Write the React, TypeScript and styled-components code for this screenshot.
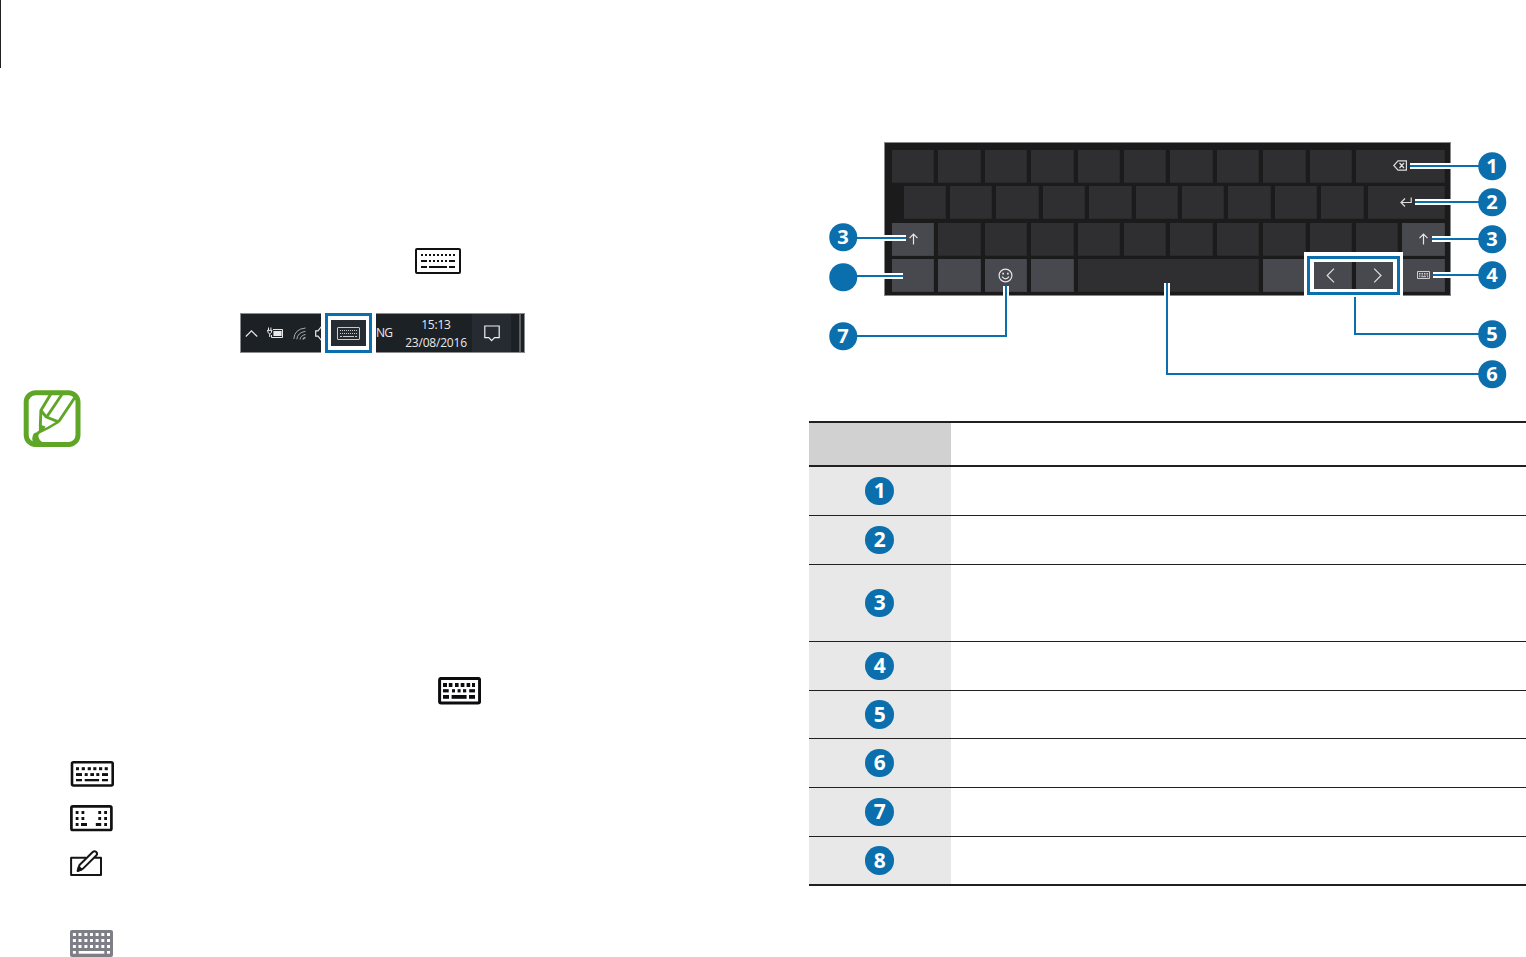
import React from 'react'
import styled, { createGlobalStyle } from 'styled-components'

const BLUE = '#0b6fae'
const INK = '#231f20'

const GlobalStyle = createGlobalStyle`
  * {
    box-sizing: border-box;
  }
  body {
    margin: 0;
    background: #fff;
    font-family: 'Open Sans', 'Noto Sans', sans-serif;
    overflow: hidden;
  }
  svg {
    display: block;
    flex: none;
  }
`

type Bar = [number, number]

interface KeyRow {
  y: number
  h: number
  bars: Bar[]
}

const KeyRows: React.FC<{ rows: KeyRow[] }> = ({ rows }) => (
  <>
    {rows.map(row => row.bars.map(([x, w]) => (
      <rect key={`${row.y}-${x}`} x={x} y={row.y} width={w} height={row.h} />
    )))}
  </>
)

const thinRows: KeyRow[] = [
  { y: 6, h: 2, bars: [[6, 2], [10, 2], [14, 2], [18, 2], [22, 2], [26, 2], [30, 2], [34, 2], [38, 2]] },
  { y: 12, h: 2, bars: [[6, 6], [14, 2], [18, 2], [22, 2], [26, 2], [30, 2], [34, 6]] },
  { y: 18, h: 2, bars: [[6, 6], [14, 18], [34, 6]] }
]

const boldRows: KeyRow[] = [
  { y: 6, h: 4, bars: [[5, 4], [10.8, 3.6], [17, 3.6], [22.7, 3.7], [28.6, 3.6], [34, 3]] },
  { y: 12.2, h: 3.2, bars: [[5, 5.7], [14, 3], [19.6, 3], [25, 3.2], [31.2, 5.8]] },
  { y: 18, h: 3.8, bars: [[5, 6], [13.6, 15], [31, 6]] }
]

const standardRows: KeyRow[] = [
  { y: 6.2, h: 3, bars: [[6, 3], [11.7, 3.2], [17.7, 3.2], [23.3, 3.1], [29, 3.2], [34.7, 3.1]] },
  { y: 12.1, h: 2.9, bars: [[6, 6], [14.7, 3], [20.3, 3.7], [26.3, 3], [32, 6]] },
  { y: 18, h: 2.3, bars: [[6, 6], [14.7, 14.4], [32, 6]] }
]

const splitRows: KeyRow[] = [
  { y: 6, h: 3, bars: [[5.7, 2.8], [11.5, 2.8], [28.3, 2.8], [34.2, 2.8]] },
  { y: 12, h: 3, bars: [[5.7, 2.8], [11.5, 2.8], [28.3, 2.8], [34.2, 2.8]] },
  { y: 18, h: 3, bars: [[5.7, 2.8], [11, 6], [25.8, 5.4], [34.2, 2.8]] }
]

const columns: Bar[] = [[2.9, 3], [8.5, 3], [14.4, 3], [20, 3], [25.6, 3], [31.3, 3], [37, 3]]

const solidRows: KeyRow[] = [
  { y: 4, h: 3, bars: columns },
  { y: 10, h: 3, bars: columns },
  { y: 16, h: 3, bars: columns },
  { y: 22, h: 2.7, bars: [[2.9, 3], [8.7, 25.6], [37, 3]] }
]

const ThinKeyboardIcon: React.FC = () => (
  <svg width="46" height="26" fill="#111">
    <rect x="1" y="1" width="44" height="24" rx="1" fill="none" stroke="#111" strokeWidth="2" />
    <KeyRows rows={thinRows} />
  </svg>
)

const BoldKeyboardIcon: React.FC = () => (
  <svg width="43" height="28" fill="#0c0c0e">
    <rect x="1.6" y="1.4" width="40" height="24.6" rx="1.5" fill="none" stroke="#0c0c0e" strokeWidth="3" />
    <KeyRows rows={boldRows} />
  </svg>
)

const StandardKeyboardIcon: React.FC = () => (
  <svg width="44" height="26" fill="#111">
    <rect x="2" y="1.3" width="40.7" height="23.2" rx="1.5" fill="none" stroke="#111" strokeWidth="2.6" />
    <KeyRows rows={standardRows} />
  </svg>
)

const SplitKeyboardIcon: React.FC = () => (
  <svg width="43" height="27" fill="#111">
    <rect x="1.4" y="1.4" width="40" height="23.6" rx="1.5" fill="none" stroke="#111" strokeWidth="2.7" />
    <KeyRows rows={splitRows} />
  </svg>
)

const HandwritingIcon: React.FC = () => (
  <svg width="34" height="27" fill="none" stroke="#151515" strokeWidth="2" strokeLinejoin="round">
    <path d="M16 7.8H1.1V25H31V7.8H24.5" />
    <path d="M8 20.5L9.5 15L23 1.8Q24.5 .6 26 1.8Q27.8 3.5 26.5 5.2L13 18.6Z" fill="#fff" />
    <path d="M7.6 21L8.8 16.8L11.6 19.6Z" fill="#151515" />
  </svg>
)

const SolidKeyboardIcon: React.FC = () => (
  <svg width="43" height="28" fill="#fff">
    <rect x="0" y="1" width="43" height="27" rx="2" fill="#7e7e87" />
    <KeyRows rows={solidRows} />
  </svg>
)

const NoteIcon: React.FC = () => (
  <svg width="58" height="57" fill="none" stroke="#5fa626" strokeWidth="2.9">
    <rect x="3.2" y="2.8" width="51.8" height="51.8" rx="9.5" strokeWidth="5" />
    <path d="M27.8 4L17.9 20.5L17.3 36M52.5 6.5L35.6 31.8" />
    <path d="M39.2 4L24 26.5M17.9 20.5L23.3 27L35.6 31.8" strokeLinejoin="round" />
    <path d="M35.6 31.8Q26 38 14.5 43" strokeWidth="2.5" />
    <path d="M16 34.2L22.6 36.4L19 41.6Q14.6 43.5 15.6 47.5Q17.2 52.5 24 53.5H10Q8.2 47 11 43.3L15.8 41.4Z" fill="#5fa626" stroke="none" />
  </svg>
)

const Page = styled.main`
  display: grid;
  grid-template-columns: 809px 717px;
  width: 1526px;
  height: 957px;
  overflow: hidden;
`

const Column = styled.section`
  display: flex;
  flex-direction: column;
`

const MarginRule = styled.div`
  width: 1px;
  height: 68px;
  background: ${INK};
`

const Line = styled.div<{ $before: number; $indent: number }>`
  display: flex;
  padding-top: ${p => p.$before}px;
  padding-left: ${p => p.$indent}px;
`

const Taskbar = styled.div`
  display: flex;
  width: 285px;
  height: 40px;
  color: #e8e9ea;
`

const TrayPart = styled.div`
  display: flex;
  align-items: center;
  gap: 9px;
  width: 81px;
  padding-left: 4px;
  overflow: hidden;
  background: #1c2126;
  border: 1px solid #8b8c8e;
  border-right: 0;
`

const TrayFocus = styled.div`
  width: 47px;
  height: 40px;
  margin: 0 4px;
  padding: 4px 3px;
  border: 3px solid ${BLUE};
`

const TrayFocusInner = styled.div`
  display: flex;
  align-items: center;
  justify-content: center;
  height: 26px;
  background: #262a31;
`

const ClockPart = styled.div`
  display: flex;
  flex: 1;
  background: #1c2126;
  border: 1px solid #8b8c8e;
  border-left: 0;
`

const Language = styled.div`
  width: 20px;
  font-size: 12px;
  letter-spacing: -0.9px;
  line-height: 38px;
`

const Clock = styled.div`
  width: 76px;
  padding: 2px 0 0 4px;
  text-align: center;
  font-size: 12px;
  letter-spacing: -0.2px;
  line-height: 18px;
`

const Notifications = styled.div`
  display: flex;
  align-items: center;
  justify-content: center;
  width: 39px;
  background: #262a31;
`

const ShowDesktop = styled.div`
  width: 10px;
  border-right: 2px solid #5c6063;
`

const Figure = styled.div`
  position: relative;
  height: 421px;
  padding: 142px 0 0 75px;
`

const Keyboard = styled.div`
  display: grid;
  grid-template-rows: repeat(4, 1fr);
  gap: 3.6px;
  width: 567px;
  height: 154px;
  padding: 7px 5px 3px 7px;
  background: #1b1b1b;
  border: 1px solid #87888a;
`

const KeyLine = styled.div<{ $shift?: boolean }>`
  display: flex;
  gap: 4px;
  padding-left: ${p => (p.$shift ? 11.7 : 0)}px;
`

const Key = styled.div<{ $light?: boolean; $width?: number; $grow?: boolean }>`
  display: flex;
  align-items: center;
  justify-content: center;
  flex: ${p => (p.$grow ? '1 1 0' : 'none')};
  width: ${p => p.$width || 42.4}px;
  background: ${p => (p.$light ? '#48494f' : '#2f2f31')};
  border: solid ${p => (p.$light ? '#414247' : '#29292a')};
  border-width: 0 1px 1px 0;
`

const Focus = styled.div`
  position: absolute;
  left: 498px;
  top: 256px;
  width: 93px;
  height: 39px;
  border: 3px solid ${BLUE};
  box-shadow: 0 -1px 0 3px #fff, inset 4px 0 #fff, inset -4px 0 #fff, inset 0 3px #fff, inset 0 -3px #fff;
`

const Leaders = styled.svg`
  position: absolute;
  left: 0;
  top: 0;
`

const Badge = styled.span<{ $size: number }>`
  display: flex;
  align-items: center;
  justify-content: center;
  width: ${p => p.$size}px;
  height: ${p => p.$size}px;
  border-radius: 50%;
  background: ${BLUE};
  color: #fff;
  font-size: ${p => p.$size * 0.73}px;
  font-weight: 700;
  font-stretch: 90%;
  line-height: 1;
`

const Pin = styled.div<{ $x: number; $y: number }>`
  position: absolute;
  left: ${p => p.$x}px;
  top: ${p => p.$y}px;
  transform: translate(-50%, -50%);
`

const Table = styled.div`
  border-top: 2px solid ${INK};
  border-bottom: 2px solid ${INK};
`

const HeadCell = styled.div`
  width: 142px;
  height: 42px;
  background: #d1d1d1;
`

const HeadRow = styled.div`
  border-bottom: 2px solid ${INK};
`

const Row = styled.div<{ $height: number }>`
  height: ${p => p.$height}px;
  border-bottom: 1px solid ${INK};
  &:last-child {
    border-bottom: 0;
  }
`

const NumberCell = styled.div`
  display: flex;
  align-items: center;
  justify-content: center;
  width: 142px;
  height: 100%;
  padding: 0 0.6px 0.2px 0;
  background: #e8e8e8;
`

const UpArrow: React.FC = () => (
  <svg width="12" height="12" fill="none" stroke="#e6e6e8" strokeWidth="1.2">
    <path d="M6.5 11.5V1.5M2.5 5.2L6.5 1.2L10.5 5.2" />
  </svg>
)

const Keys: React.FC<{ count: number; light?: boolean }> = ({ count, light }) => (
  <>
    {Array.from({ length: count }, (_, i) => <Key key={i} $light={light} />)}
  </>
)

const TouchKeyboard: React.FC = () => (
  <Keyboard>
    <KeyLine>
      <Keys count={10} />
      <Key $grow>
        <svg width="14" height="11" fill="none" stroke="#ddd">
          <path d="M5 .8H13.4V10.2H5L.8 5.5ZM6.5 3L11 8M11 3L6.5 8" strokeWidth="1.2" />
        </svg>
      </Key>
    </KeyLine>
    <KeyLine $shift>
      <Keys count={10} />
      <Key $grow>
        <svg width="12" height="10" fill="none" stroke="#ddd" strokeWidth="1.2">
          <path d="M11.2 .5V5.5H1M5 1.5L1 5.5L5 9.5" />
        </svg>
      </Key>
    </KeyLine>
    <KeyLine>
      <Key $light><UpArrow /></Key>
      <Keys count={10} />
      <Key $light $grow><UpArrow /></Key>
    </KeyLine>
    <KeyLine>
      <Keys count={2} light />
      <Key $light>
        <svg width="16" height="15" fill="none" stroke="#e6e6e8" strokeWidth="1.2">
          <circle cx="8.5" cy="7.5" r="6.4" />
          <path d="M5 8.6Q8.5 13 12 8.6" />
          <path d="M5.3 5.6H7M10 5.6H11.7" strokeWidth="1.6" />
        </svg>
      </Key>
      <Key $light />
      <Key $width={181.6} />
      <Key $light />
      <Key $light>
        <svg width="9" height="15" fill="none" stroke="#ddd" strokeWidth="1.2">
          <path d="M8 .7L1.2 7.5L8 14.3" />
        </svg>
      </Key>
      <Key $light>
        <svg width="10" height="15" fill="none" stroke="#ddd" strokeWidth="1.2">
          <path d="M2.2 .7L9 7.5L2.2 14.3" />
        </svg>
      </Key>
      <Key $light $grow>
        <svg width="13" height="8" fill="none" stroke="#ccccd0">
          <path d="M.5 .5H12.5V7.5H.5Z" />
          <path d="M2 2.5H11.5M2 4H11.5" strokeDasharray="1.5 1" />
          <path d="M2 5.7H3.2M4.2 5.7H9M10 5.7H11.2" />
        </svg>
      </Key>
    </KeyLine>
  </Keyboard>
)

// Leader lines that start on a key get a white halo up to the keyboard edge
const halos = [
  'M601 166H642', 'M606 202H642', 'M623 239H642', 'M624 275H642',
  'M75 238H97', 'M75 276H94', 'M197 286V296', 'M358 283V296'
]

const leaders = [
  'M601 166H672', 'M606 202H672', 'M623 239H672', 'M624 275H672',
  'M45 238H97', 'M45 276H94', 'M197 286V336H45', 'M358 283V374H672',
  'M546 295V334H672'
]

const pins = [
  { x: 683, y: 166, label: '1' },
  { x: 683, y: 202, label: '2' },
  { x: 683, y: 239, label: '3' },
  { x: 683, y: 275, label: '4' },
  { x: 683, y: 334, label: '5' },
  { x: 683, y: 374, label: '6' },
  { x: 34, y: 237, label: '3' },
  { x: 34, y: 277, label: '' },
  { x: 34, y: 336, label: '7' }
]

const rowHeights = [49, 49, 77, 49, 48, 49, 49, 47]

const App: React.FC = () => (
  <>
    <GlobalStyle />
    <Page>
      <Column>
        <MarginRule />
        <Line $before={180} $indent={415}><ThinKeyboardIcon /></Line>
        <Line $before={39} $indent={240}>
          <Taskbar>
            <TrayPart>
              <svg width="13" height="9" fill="none" stroke="currentColor" strokeWidth="1.2">
                <path d="M.8 7.5L6.5 1.8L12.2 7.5" />
              </svg>
              <svg width="17" height="13" fill="none" stroke="currentColor">
                <path d="M6 2.5H15.5V10.5H4.5V8" />
                <rect x="6.4" y="4" width="8.2" height="5" fill="currentColor" stroke="none" />
                <path d="M1.5 .5V3M3.9 .5V3M0 3.4H5.4M.9 3.5V5.5L2.7 6.8L4.5 5.5V3.5M2.7 6.8V10" />
              </svg>
              <svg width="13" height="13" fill="none" stroke="#a9acae">
                <path d="M.8 12Q1.5 2 12.5 1M3.8 12.3Q4.5 5.5 12.5 4.3M7 12.5Q7.5 8.5 12.5 7.5" />
                <path d="M10 12.5Q10.2 11 12.5 10.5" strokeWidth="1.6" />
              </svg>
              <svg width="12" height="15" fill="none" stroke="currentColor" strokeWidth="1.2">
                <path d="M6.5 .5L3 4.8H.7V10.2H3L6.5 14.5" />
              </svg>
            </TrayPart>
            <TrayFocus>
              <TrayFocusInner>
                <svg width="23" height="13" fill="none" stroke="#c9cacc">
                  <rect x=".5" y=".5" width="22" height="12" rx=".5" />
                  <path d="M3 3.5H20" strokeDasharray="1 1" />
                  <path d="M3 6.5H20" strokeDasharray="1 1" />
                  <path d="M3 9.5H5M6 9.5H17M18 9.5H20" />
                </svg>
              </TrayFocusInner>
            </TrayFocus>
            <ClockPart>
              <Language>NG</Language>
              <Clock>
                <div>15:13</div>
                <div>23/08/2016</div>
              </Clock>
              <Notifications>
                <svg width="16" height="17" fill="none" stroke="#f0f0f0" strokeWidth="1.2">
                  <path d="M.8 1H15.2V12.6H10.5L7.6 15.6L4.8 12.6H.8Z" />
                </svg>
              </Notifications>
              <ShowDesktop />
            </ClockPart>
          </Taskbar>
        </Line>
        <Line $before={37} $indent={23}><NoteIcon /></Line>
        <Line $before={230} $indent={438}><BoldKeyboardIcon /></Line>
        <Line $before={56} $indent={70}><StandardKeyboardIcon /></Line>
        <Line $before={18} $indent={70}><SplitKeyboardIcon /></Line>
        <Line $before={18} $indent={70}><HandwritingIcon /></Line>
        <Line $before={52} $indent={70}><SolidKeyboardIcon /></Line>
      </Column>
      <Column>
        <Figure>
          <TouchKeyboard />
          <Leaders width="717" height="421" fill="none">
            <path d={halos.join('')} stroke="#fff" strokeWidth="6" />
            <path d={leaders.join('')} stroke={BLUE} strokeWidth="2" />
          </Leaders>
          <Focus />
          {pins.map(pin => (
            <Pin key={`${pin.x}-${pin.y}`} $x={pin.x} $y={pin.y}>
              <Badge $size={27.5}>{pin.label}</Badge>
            </Pin>
          ))}
        </Figure>
        <Table>
          <HeadRow><HeadCell /></HeadRow>
          {rowHeights.map((height, i) => (
            <Row key={i} $height={height}>
              <NumberCell><Badge $size={28.7}>{i + 1}</Badge></NumberCell>
            </Row>
          ))}
        </Table>
      </Column>
    </Page>
  </>
)

export default App
